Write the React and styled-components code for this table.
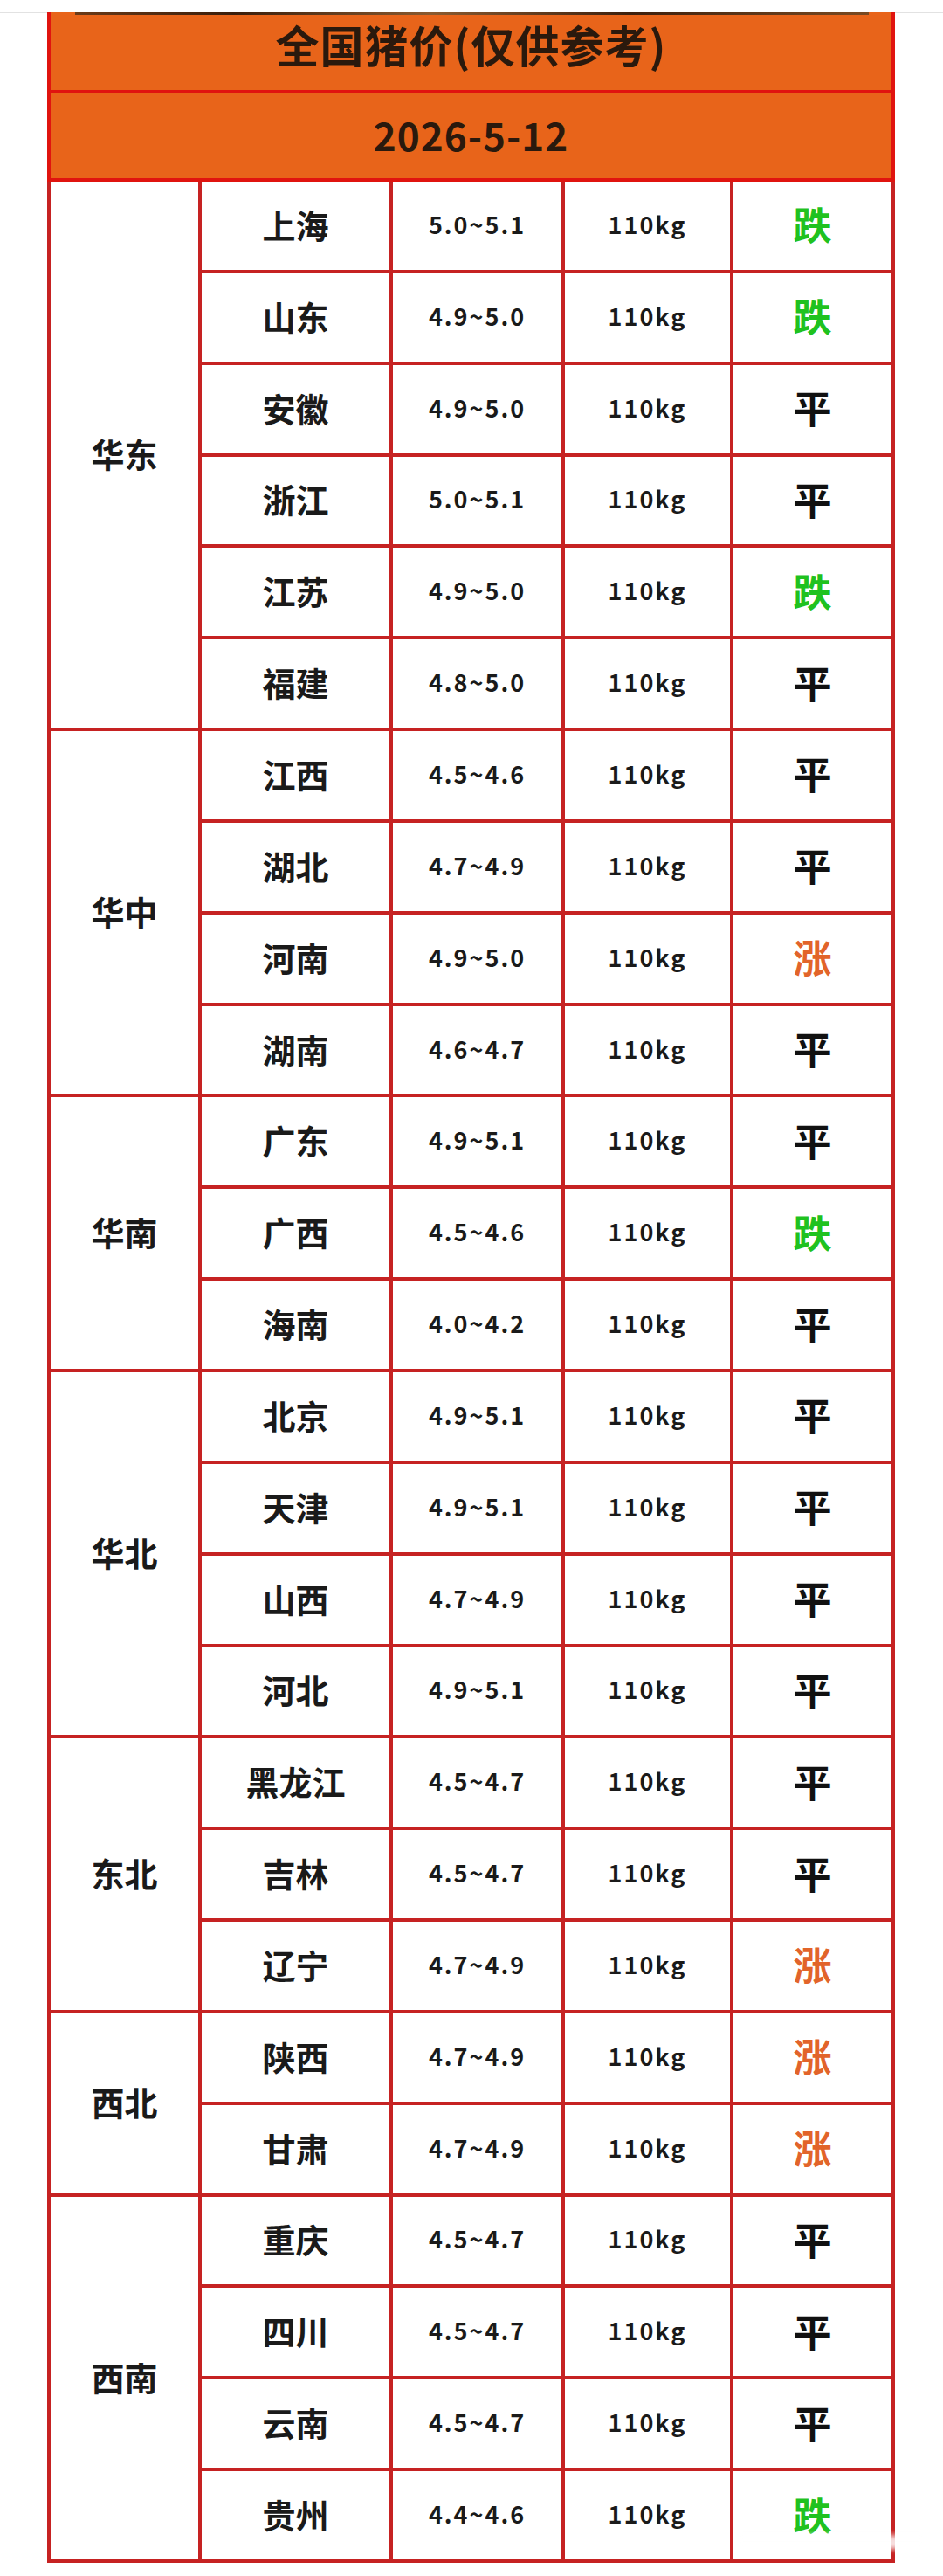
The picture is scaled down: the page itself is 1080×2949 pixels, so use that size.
import React from "react";
import styled, { createGlobalStyle } from "styled-components";

const regions = [
  {
    name: "华东",
    rows: [
      ["上海", "5.0~5.1", "跌"],
      ["山东", "4.9~5.0", "跌"],
      ["安徽", "4.9~5.0", "平"],
      ["浙江", "5.0~5.1", "平"],
      ["江苏", "4.9~5.0", "跌"],
      ["福建", "4.8~5.0", "平"],
    ],
  },
  {
    name: "华中",
    rows: [
      ["江西", "4.5~4.6", "平"],
      ["湖北", "4.7~4.9", "平"],
      ["河南", "4.9~5.0", "涨"],
      ["湖南", "4.6~4.7", "平"],
    ],
  },
  {
    name: "华南",
    rows: [
      ["广东", "4.9~5.1", "平"],
      ["广西", "4.5~4.6", "跌"],
      ["海南", "4.0~4.2", "平"],
    ],
  },
  {
    name: "华北",
    rows: [
      ["北京", "4.9~5.1", "平"],
      ["天津", "4.9~5.1", "平"],
      ["山西", "4.7~4.9", "平"],
      ["河北", "4.9~5.1", "平"],
    ],
  },
  {
    name: "东北",
    rows: [
      ["黑龙江", "4.5~4.7", "平"],
      ["吉林", "4.5~4.7", "平"],
      ["辽宁", "4.7~4.9", "涨"],
    ],
  },
  {
    name: "西北",
    rows: [
      ["陕西", "4.7~4.9", "涨"],
      ["甘肃", "4.7~4.9", "涨"],
    ],
  },
  {
    name: "西南",
    rows: [
      ["重庆", "4.5~4.7", "平"],
      ["四川", "4.5~4.7", "平"],
      ["云南", "4.5~4.7", "平"],
      ["贵州", "4.4~4.6", "跌"],
    ],
  },
];

const trendColors = {
  跌: "#1fc21f",
  涨: "#e2642a",
  平: "#111111",
};

const GlobalStyle = createGlobalStyle`
  html, body {
    margin: 0;
    padding: 0;
    background: #ffffff;
  }
  body {
    font-family: "Noto Sans CJK SC", "Noto Sans", sans-serif;
    color: #1a1a1a;
  }
`;

const Page = styled.div`
  position: relative;
  width: 1080px;
  min-height: 2949px;
  padding-top: 14px;
  box-sizing: border-box;
  background: #ffffff;

  &::before {
    content: "";
    position: absolute;
    top: 14px;
    left: 0;
    right: 0;
    height: 1px;
    background: #e2e2e2;
  }
`;

const Sheet = styled.div`
  width: 971px;
  margin-left: 54px;
`;

const Banner = styled.div`
  position: relative;
  display: flex;
  align-items: center;
  justify-content: center;
  width: 963px;
  height: ${(p) => p.$height}px;
  background: #e8641a;
  border-left: 4px solid #e0140f;
  border-right: 4px solid #e0140f;
  border-bottom: 4px solid #e0140f;
`;

// dark edge of the photo that was cut off above the banner
const PhotoEdge = styled.div`
  position: absolute;
  top: 0;
  left: 28px;
  right: 26px;
  height: 3px;
  background: linear-gradient(
    90deg,
    #6b3a18 0%,
    #3a1e0c 20%,
    #8a5a30 45%,
    #3d200e 70%,
    #7a4a22 100%
  );
`;

const Title = styled.div`
  font-size: 50px;
  font-weight: 700;
  color: #2a190d;
  letter-spacing: 1px;
  margin-top: -18px;
`;

const DateText = styled.div`
  font-size: 44px;
  font-weight: 700;
  color: #2a190d;
  letter-spacing: 1px;
  margin-top: -4px;
`;

const Grid = styled.div`
  display: grid;
  grid-template-columns: 169px 215px 193px 189px 181px;
  grid-auto-rows: 100.85px;
  gap: 4px;
  padding: 0 4px 4px;
  background: #c62222;
`;

const Cell = styled.div`
  display: flex;
  align-items: center;
  justify-content: center;
  padding-bottom: 4px;
  background: #ffffff;
  font-weight: 700;
  color: #1a1a1a;
`;

const RegionCell = styled(Cell)`
  grid-column: 1;
  grid-row: span ${(p) => p.$span};
  font-size: 38px;
`;

const PlaceCell = styled(Cell)`
  font-size: 38px;
`;

const NumberCell = styled(Cell)`
  font-size: 27px;
  letter-spacing: 2px;
`;

const TrendCell = styled(Cell)`
  font-size: 44px;
  color: ${(p) => trendColors[p.$trend]};
`;

const ScrollGlare = styled.div`
  position: absolute;
  top: 2898px;
  left: 846px;
  width: 212px;
  height: 24px;
  background: linear-gradient(
    180deg,
    rgba(255, 255, 255, 0) 0%,
    rgba(255, 255, 255, 0.85) 35%,
    rgba(255, 255, 255, 0.85) 70%,
    rgba(255, 255, 255, 0) 100%
  );
  filter: blur(2px);
`;

export default function App() {
  return (
    <>
      <GlobalStyle />
      <Page>
        <Sheet>
          <Banner $height={89}>
            <PhotoEdge />
            <Title>全国猪价(仅供参考)</Title>
          </Banner>
          <Banner $height={97}>
            <DateText>2026-5-12</DateText>
          </Banner>
          <Grid>
            {regions.map((region) => (
              <React.Fragment key={region.name}>
                <RegionCell $span={region.rows.length}>{region.name}</RegionCell>
                {region.rows.map(([place, price, trend]) => (
                  <React.Fragment key={place}>
                    <PlaceCell>{place}</PlaceCell>
                    <NumberCell>{price}</NumberCell>
                    <NumberCell>110kg</NumberCell>
                    <TrendCell $trend={trend}>{trend}</TrendCell>
                  </React.Fragment>
                ))}
              </React.Fragment>
            ))}
          </Grid>
        </Sheet>
        <ScrollGlare />
      </Page>
    </>
  );
}
